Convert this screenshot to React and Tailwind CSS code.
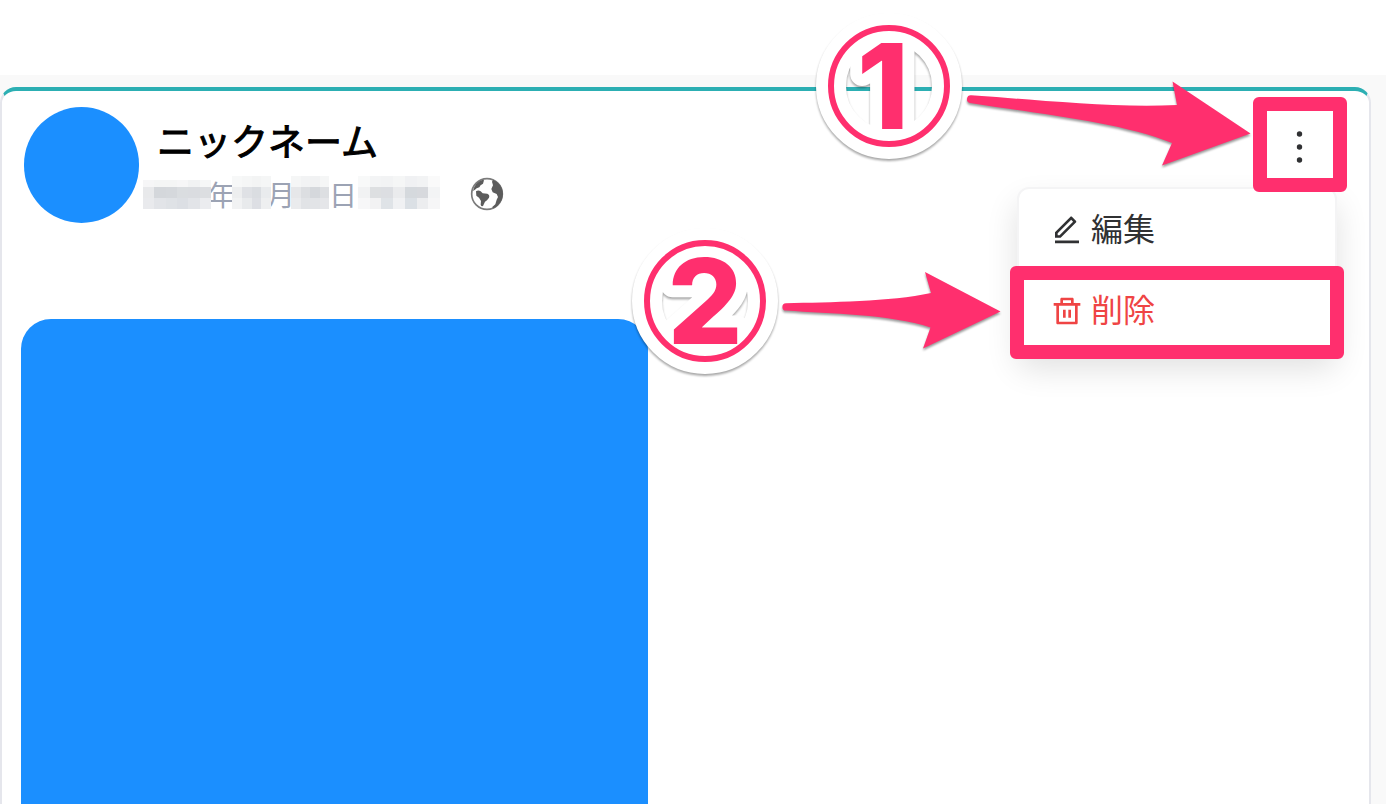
import { RiDeleteBinLine, RiEditLine } from "react-icons/ri";

const MASKS = {
  year: {
    columns: 6,
    rows: "7px 11px 11px",
    cells: [
      "#f6f6f7", "#f4f5f5", "#f4f5f5", "#f6f6f7", "#f1f2f3", "#f6f7f7",
      "#e8e9eb", "#d4d7db", "#d5d8dc", "#dadde0", "#dadce0", "#dcdee1",
      "#e9eaed", "#e2e4e8", "#dfe2e6", "#dcdfe4", "#e2e4e8", "#ebecef",
    ],
  },
  month: {
    columns: 4,
    rows: "11px 11px 11px",
    cells: [
      "#f7f8f8", "#f5f6f6", "#f3f4f4", "#f5f6f6",
      "#edeeef", "#dfe1e5", "#dadde1", "#e9ebed",
      "#f1f2f3", "#e8eaec", "#dddfe4", "#eeeff0",
    ],
  },
  day: {
    columns: 4,
    rows: "11px 11px 11px",
    cells: [
      "#f5f6f6", "#f2f3f4", "#f1f2f3", "#f5f6f6",
      "#e6e7e9", "#dcdee1", "#d5d8dc", "#dddfe2",
      "#eaebed", "#e1e3e6", "#e2e4e7", "#e5e6e9",
    ],
  },
  time: {
    columns: 7,
    rows: "11px 11px 11px",
    cells: [
      "#f8f9f9", "#f3f4f5", "#f2f3f4", "#f5f6f6", "#f0f1f3", "#f2f3f4", "#fafafa",
      "#f1f2f3", "#dddfe1", "#dcdee2", "#eaebed", "#d5d9dd", "#d7d9dd", "#f3f4f5",
      "#f7f7f8", "#f2f2f3", "#dfe3e7", "#f0f1f3", "#dbe0e5", "#ecedef", "#f6f6f7",
    ],
  },
};

function Mask({ name, className }) {
  const { columns, rows, cells } = MASKS[name];
  return (
    <span
      aria-hidden="true"
      className={`relative z-10 grid shrink-0 ${className}`}
      style={{ gridTemplateColumns: `repeat(${columns}, 1fr)`, gridTemplateRows: rows }}
    >
      {cells.map((color, i) => (
        <span key={i} style={{ backgroundColor: color }} />
      ))}
    </span>
  );
}

function GlobeIcon() {
  return (
    <svg viewBox="0 0 102 102" className="size-[34px]" role="img" aria-label="公開">
      <circle cx="51" cy="51" r="46" fill="#fff" stroke="#7b7b7b" strokeWidth="5" />
      <path
        fill="#5c5c5c"
        d="M9 42 Q14 16 38 8 L42 10 L39 20 Q30 23 28 31 L20 34 L15 38 Z M18 43 Q25 38 32 43 L38 49 L52 50 Q60 53 57 62 L51 70 L45 74 L39 87 Q34 89 32 83 L33 72 L27 62 L19 56 Z M69 8 Q98 20 99 51 Q97 80 71 94 L66 91 L76 82 L80 68 L84 60 L80 51 L68 46 L64 36 L69 25 L66 14 Z"
      />
    </svg>
  );
}

function StepBadge({ number, numberX, className }) {
  return (
    <svg
      viewBox="0 0 160 160"
      className={`pointer-events-none absolute size-[160px] drop-shadow-[0_2px_1px_rgba(0,0,0,0.35)] ${className}`}
    >
      <circle cx="80" cy="80" r="58" fill="none" stroke="#fff" strokeWidth="30" />
      <text
        x={numberX}
        y="123"
        textAnchor="middle"
        strokeLinejoin="round"
        className="fill-[#ff2f6e] stroke-white stroke-[24px] font-['Inter',sans-serif] text-[118px] font-extrabold [paint-order:stroke]"
      >
        {number}
      </text>
      <circle cx="80" cy="80" r="58" fill="none" stroke="#ff2f6e" strokeWidth="6" />
    </svg>
  );
}

function Arrow({ viewBox, d, className }) {
  return (
    <svg
      viewBox={viewBox}
      aria-hidden="true"
      className={`pointer-events-none absolute drop-shadow-[0_2px_1px_rgba(0,0,0,0.4)] ${className}`}
    >
      <path d={d} fill="#ff2f6e" />
    </svg>
  );
}

function PostMenu() {
  return (
    <div className="relative shrink-0">
      <button
        type="button"
        aria-label="メニュー"
        aria-expanded="true"
        className="relative z-10 flex h-[95px] w-[94px] items-center justify-center rounded-md border-[14px] border-[#ff2f6e] bg-white pt-1"
      >
        <svg viewBox="0 0 32 40" className="h-10 w-8" fill="#303133">
          <circle cx="15.5" cy="7" r="2.7" />
          <circle cx="15.5" cy="20" r="2.7" />
          <circle cx="15.5" cy="33" r="2.7" />
        </svg>
      </button>
      <div className="absolute right-[10px] top-[90px] w-[320px] rounded-xl border-2 border-[#f4f4f5] bg-white text-[32px] leading-[48px] shadow-[0_16px_32px_rgba(0,0,0,0.12)]">
        <button type="button" className="flex h-[81px] w-full items-center gap-2 px-8 text-[#303133]">
          <RiEditLine className="size-8" />
          <span className="pb-[6px]">編集</span>
        </button>
        <button type="button" className="relative flex h-[81px] w-full items-center gap-2 px-8 text-[#ef4444]">
          <RiDeleteBinLine className="size-8" />
          <span className="pb-[6px]">削除</span>
          <span className="absolute -inset-x-[9px] -bottom-[8px] -top-[4px] rounded-md border-[14px] border-[#ff2f6e]" />
        </button>
      </div>
    </div>
  );
}

export default function App() {
  return (
    <div className="relative flex min-h-screen flex-col overflow-hidden bg-[#f9f9f9] font-['Noto_Sans_CJK_JP',sans-serif]">
      <div className="h-[75px] bg-white" />
      <main className="flex flex-1 flex-col pr-[15px] pt-3">
        <article className="flex flex-1 flex-col rounded-t-2xl border-x-2 border-t-4 border-x-[#e5e6ec] border-t-[#2cafb3] bg-white">
          <header className="flex items-start justify-between px-[22px] pt-[6px]">
            <div className="flex items-start pt-[10px]">
              <div className="h-[116px] w-[115px] rounded-full bg-[#1b8fff]" />
              <div className="pl-1 pt-[6px]">
                <h1 className="pl-[14px] text-[37px] font-normal leading-[54px] text-black [-webkit-text-stroke:1px_black]">
                  ニックネーム
                </h1>
                <div className="flex h-[54px] items-center text-[28px] leading-[40px] text-[#9ca3b4]">
                  <Mask name="year" className="w-[68px]" />
                  <span className="flex w-[21px] justify-center">年</span>
                  <Mask name="month" className="mb-1 w-[39px]" />
                  <span className="flex w-[20px] justify-center">月</span>
                  <Mask name="day" className="mb-1 w-[38px]" />
                  <span className="w-[29px]">日</span>
                  <Mask name="time" className="mb-1 w-[82px]" />
                  <span className="pl-[30px]">
                    <GlobeIcon />
                  </span>
                </div>
              </div>
            </div>
            <PostMenu />
          </header>
          <div className="ml-[19px] mt-[96px] w-[627px] max-w-full flex-1 rounded-t-[30px] bg-[#1b8fff]" />
        </article>
      </main>

      <StepBadge number="1" numberX="74" className="right-[417px] top-[6px]" />
      <StepBadge number="2" numberX="80" className="right-[601px] top-[221px]" />
      <Arrow
        viewBox="960 75 296 100"
        className="right-[130px] top-[75px] h-[100px] w-[296px]"
        d="M971 95.3 C1040 100 1110 108 1177 105 L1172.5 81.5 L1250.5 133.5 L1162 165.5 L1172 143 C1120 122 1040 114 970 103 A3.9 3.9 0 0 1 971 95.3 Z"
      />
      <Arrow
        viewBox="776 262 230 100"
        className="right-[380px] top-[262px] h-[100px] w-[230px]"
        d="M786 303.3 C830 302 890 302 931 293 L925 272 L1000.5 311.5 L923 348.5 L930.5 327.5 C890 314 830 314 786 310.5 A3.6 3.6 0 0 1 786 303.3 Z"
      />
    </div>
  );
}
